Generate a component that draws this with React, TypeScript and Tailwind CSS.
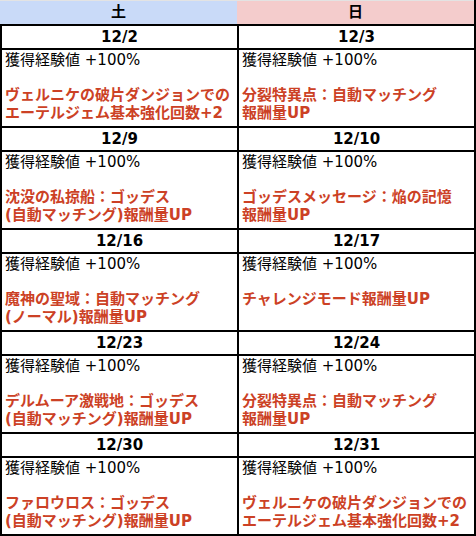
import * as React from 'react';

type Day = { date: string; lines: string[] };

const rows: [Day, Day][] = [
  [
    { date: '12/2', lines: ['ヴェルニケの破片ダンジョンでの', 'エーテルジェム基本強化回数+2'] },
    { date: '12/3', lines: ['分裂特異点：自動マッチング', '報酬量UP'] },
  ],
  [
    { date: '12/9', lines: ['沈没の私掠船：ゴッデス', '(自動マッチング)報酬量UP'] },
    { date: '12/10', lines: ['ゴッデスメッセージ：焔の記憶', '報酬量UP'] },
  ],
  [
    { date: '12/16', lines: ['魔神の聖域：自動マッチング', '(ノーマル)報酬量UP'] },
    { date: '12/17', lines: ['チャレンジモード報酬量UP'] },
  ],
  [
    { date: '12/23', lines: ['デルムーア激戦地：ゴッデス', '(自動マッチング)報酬量UP'] },
    { date: '12/24', lines: ['分裂特異点：自動マッチング', '報酬量UP'] },
  ],
  [
    { date: '12/30', lines: ['ファロウロス：ゴッデス', '(自動マッチング)報酬量UP'] },
    { date: '12/31', lines: ['ヴェルニケの破片ダンジョンでの', 'エーテルジェム基本強化回数+2'] },
  ],
];

const font = { fontFamily: '"DejaVu Sans", "Noto Sans CJK JP", sans-serif' };

function DateCell({ date }: { date: string }) {
  return (
    <div className="h-[22px] bg-white flex items-center justify-center text-[15px] font-bold text-black leading-none">
      {date}
    </div>
  );
}

function BodyCell({ lines }: { lines: string[] }) {
  return (
    <div className="h-[76px] bg-white pl-[3px] pt-[2px] text-[15px] leading-[17.5px]">
      <div className="text-black">獲得経験値 +100%</div>
      <div>&nbsp;</div>
      {lines.map((l) => (
        <div key={l} className="font-bold text-[#cc4125] whitespace-nowrap">
          {l}
        </div>
      ))}
    </div>
  );
}

export default function App() {
  return (
    <div className="w-[476px] h-[536px] bg-black" style={font}>
      {/* header row: weekday labels */}
      <div className="flex h-[24px] pr-[2px]">
        <div className="w-[237px] bg-[#c9daf8] border-t border-[#e3e3e3] flex items-center justify-center text-[15px] font-bold text-black">
          土
        </div>
        <div className="w-[237px] bg-[#f4cccc] border-t border-[#e3e3e3] flex items-center justify-center text-[15px] font-bold text-black">
          日
        </div>
      </div>
      <div className="grid grid-cols-[235px_235px] gap-[2px] p-[2px]">
        {rows.map(([sat, sun]) => (
          <React.Fragment key={sat.date}>
            <DateCell date={sat.date} />
            <DateCell date={sun.date} />
            <BodyCell lines={sat.lines} />
            <BodyCell lines={sun.lines} />
          </React.Fragment>
        ))}
      </div>
    </div>
  );
}
